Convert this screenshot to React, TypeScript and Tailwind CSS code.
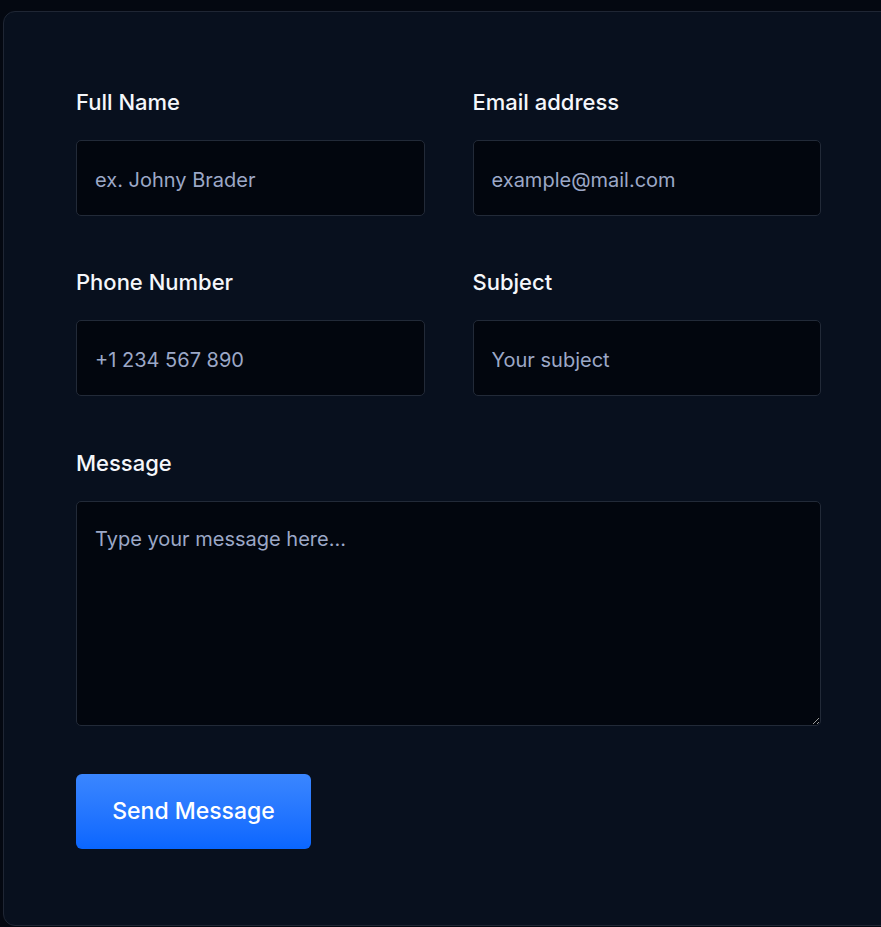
import { useState } from "react";

type Field = {
  id: string;
  label: string;
  placeholder: string;
  type?: string;
};

const fields: Field[] = [
  { id: "name", label: "Full Name", placeholder: "ex. Johny Brader" },
  { id: "email", label: "Email address", placeholder: "example@mail.com", type: "email" },
  { id: "phone", label: "Phone Number", placeholder: "+1 234 567 890", type: "tel" },
  { id: "subject", label: "Subject", placeholder: "Your subject" },
];

const inputClass =
  "w-full rounded-[5px] border border-[#222a38] bg-[#02060e] px-[18px] text-[20px] text-[#e2e8f0] outline-none placeholder:text-[#9ca8c7] focus:border-[#2f6bff]";

const labelClass = "mb-[24px] text-[22px] leading-7 font-medium text-[#f5f7fb]";

export default function App() {
  const [values, setValues] = useState<Record<string, string>>({});

  const update = (id: string, v: string) => setValues((s) => ({ ...s, [id]: v }));

  return (
    <div
      className="h-[927px] w-full overflow-hidden bg-[#040811] pt-[11px] pl-[3px]"
      style={{ fontFamily: "Inter, 'Noto Sans', sans-serif" }}
    >
      <form
        className="w-[920px] rounded-[12px] border border-[#1f2634] bg-[#08101e] pt-[76px] pb-[76px] pl-[72px]"
        onSubmit={(e) => e.preventDefault()}
      >
        <div className="grid w-[745px] grid-cols-2 gap-x-12 gap-y-[52px]">
          {fields.map((f) => (
            <div key={f.id} className="flex flex-col">
              <label htmlFor={f.id} className={labelClass}>
                {f.label}
              </label>
              <input
                id={f.id}
                type={f.type ?? "text"}
                placeholder={f.placeholder}
                value={values[f.id] ?? ""}
                onChange={(e) => update(f.id, e.target.value)}
                className={`${inputClass} h-[76px] pt-[4px]`}
              />
            </div>
          ))}
          <div className="col-span-2 mt-[1px] flex flex-col">
            <label htmlFor="message" className={labelClass}>
              Message
            </label>
            <textarea
              id="message"
              placeholder="Type your message here..."
              value={values.message ?? ""}
              onChange={(e) => update("message", e.target.value)}
              className={`${inputClass} h-[225px] py-[23px] leading-7`}
            />
          </div>
        </div>
        <button
          type="submit"
          className="mt-[48px] h-[75px] w-[235px] rounded-[6px] bg-gradient-to-b from-[#3a86ff] to-[#0966ff] text-[23px] font-medium text-white"
        >
          Send Message
        </button>
      </form>
    </div>
  );
}
